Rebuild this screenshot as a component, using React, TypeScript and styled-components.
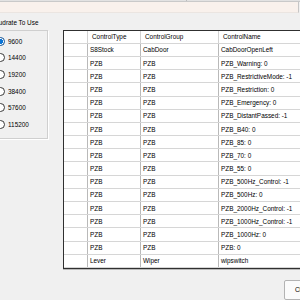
import React, { useState } from "react";
import styled, { createGlobalStyle } from "styled-components";

const GlobalStyle = createGlobalStyle`
  html, body {
    margin: 0;
    padding: 0;
    background: #f0f0f0;
  }
  body {
    font-family: "Liberation Sans", Arial, sans-serif;
  }
`;

const Window = styled.div`
  width: 300px;
  height: 300px;
  overflow: hidden;
  background: #f0f0f0;
  display: flex;
  flex-direction: column;
  font-size: 6.4px;
  color: #000;
`;

const TopEdge = styled.div`
  height: 2px;
  display: flex;
  background: #e2e2e2;
  border-bottom: 1px solid #c9c9c9;
`;

const TopEdgePart = styled.div<{ $width: number }>`
  width: ${(p) => p.$width}px;
  border-right: 1px solid #bcbcbc;
`;

const StatusBox = styled.div`
  box-sizing: border-box;
  width: 299px;
  height: 15px;
  background: #f9f1ec;
  border-right: 1px solid #c6c6c6;
  border-bottom: 1px solid #ebe5e1;
`;

const Caption = styled.div`
  margin: 6px 0 0 -9px;
  line-height: 8px;
  white-space: nowrap;
`;

const Body = styled.div`
  display: flex;
  align-items: flex-start;
  margin-top: 3px;
`;

const GroupPanel = styled.div`
  box-sizing: border-box;
  flex: none;
  width: 62px;
  margin-left: -14px;
  padding: 2px 0 5px 9px;
  border: 1px solid #cfcfcf;
  box-shadow: 1px 1px 0 #ffffff;
  display: flex;
  flex-direction: column;
`;

const RadioRow = styled.label`
  height: 16.67px;
  display: flex;
  align-items: center;
  gap: 3px;
  cursor: pointer;
`;

const RadioDot = styled.span<{ $checked: boolean }>`
  box-sizing: border-box;
  width: 9px;
  height: 9px;
  border-radius: 50%;
  border: 1px solid ${(p) => (p.$checked ? "#0b4f94" : "#3a3a3a")};
  background: ${(p) =>
    p.$checked
      ? "radial-gradient(circle, #0a74d6 0 2.4px, #ffffff 2.6px)"
      : "#ffffff"};
  flex: none;
`;

const Grid = styled.div`
  flex: none;
  width: 270px;
  margin-left: 15px;
  background: #ffffff;
  border-top: 1px solid #303030;
  border-left: 1px solid #303030;
  border-bottom: 1px solid #303030;
  box-shadow: 0 1px 0 #b8b8b8;
`;

const Row = styled.div<{ $header?: boolean }>`
  box-sizing: border-box;
  display: grid;
  grid-template-columns: 24px 53px 78px 1fr;
  height: ${(p) => (p.$header ? "13px" : "13.2px")};
  border-bottom: 1px solid #d6d6d6;
`;

const Cell = styled.div<{ $header?: boolean }>`
  box-sizing: border-box;
  display: flex;
  align-items: center;
  padding-left: ${(p) => (p.$header ? "4px" : "2px")};
  border-right: 1px solid ${(p) => (p.$header ? "#d2d2d2" : "#b9b9b9")};
  white-space: nowrap;
  overflow: hidden;
`;

const RowHead = styled.div`
  box-sizing: border-box;
  border-right: 1px solid #b9b9b9;
  background: #ffffff;
`;

const Footer = styled.div`
  display: flex;
  justify-content: flex-end;
  margin-top: 11px;
`;

const Button = styled.button`
  box-sizing: border-box;
  flex: none;
  width: 60px;
  height: 20px;
  margin-right: -44px;
  padding: 0 0 0 10px;
  text-align: left;
  font-family: inherit;
  font-size: 6.4px;
  color: #000;
  background: #fbfbfb;
  border: 1px solid #b3b3b3;
  border-radius: 2px;
`;

const rates = ["9600", "14400", "19200", "38400", "57600", "115200"];

const rows: [string, string, string][] = [
  ["S8Stock", "CabDoor", "CabDoorOpenLeft"],
  ["PZB", "PZB", "PZB_Warning: 0"],
  ["PZB", "PZB", "PZB_RestrictiveMode: -1"],
  ["PZB", "PZB", "PZB_Restriction: 0"],
  ["PZB", "PZB", "PZB_Emergency: 0"],
  ["PZB", "PZB", "PZB_DistantPassed: -1"],
  ["PZB", "PZB", "PZB_B40: 0"],
  ["PZB", "PZB", "PZB_85: 0"],
  ["PZB", "PZB", "PZB_70: 0"],
  ["PZB", "PZB", "PZB_55: 0"],
  ["PZB", "PZB", "PZB_500Hz_Control: -1"],
  ["PZB", "PZB", "PZB_500Hz: 0"],
  ["PZB", "PZB", "PZB_2000Hz_Control: -1"],
  ["PZB", "PZB", "PZB_1000Hz_Control: -1"],
  ["PZB", "PZB", "PZB_1000Hz: 0"],
  ["PZB", "PZB", "PZB: 0"],
  ["Lever", "Wiper", "wipswitch"],
];

const App: React.FC = () => {
  const [rate, setRate] = useState<string>("9600");

  return (
    <Window>
      <GlobalStyle />
      <TopEdge>
        <TopEdgePart $width={186} />
      </TopEdge>
      <StatusBox />
      <Caption>Baudrate To Use</Caption>
      <Body>
        <GroupPanel>
          {rates.map((r) => (
            <RadioRow key={r} onClick={() => setRate(r)}>
              <RadioDot $checked={rate === r} />
              {r}
            </RadioRow>
          ))}
        </GroupPanel>
        <Grid>
          <Row $header>
            <Cell $header />
            <Cell $header>ControlType</Cell>
            <Cell $header>ControlGroup</Cell>
            <Cell $header>ControlName</Cell>
          </Row>
          {rows.map(([type, group, name], i) => (
            <Row key={i}>
              <RowHead />
              <Cell>{type}</Cell>
              <Cell>{group}</Cell>
              <Cell>{name}</Cell>
            </Row>
          ))}
        </Grid>
      </Body>
      <Footer>
        <Button>Close</Button>
      </Footer>
    </Window>
  );
};

export default App;
